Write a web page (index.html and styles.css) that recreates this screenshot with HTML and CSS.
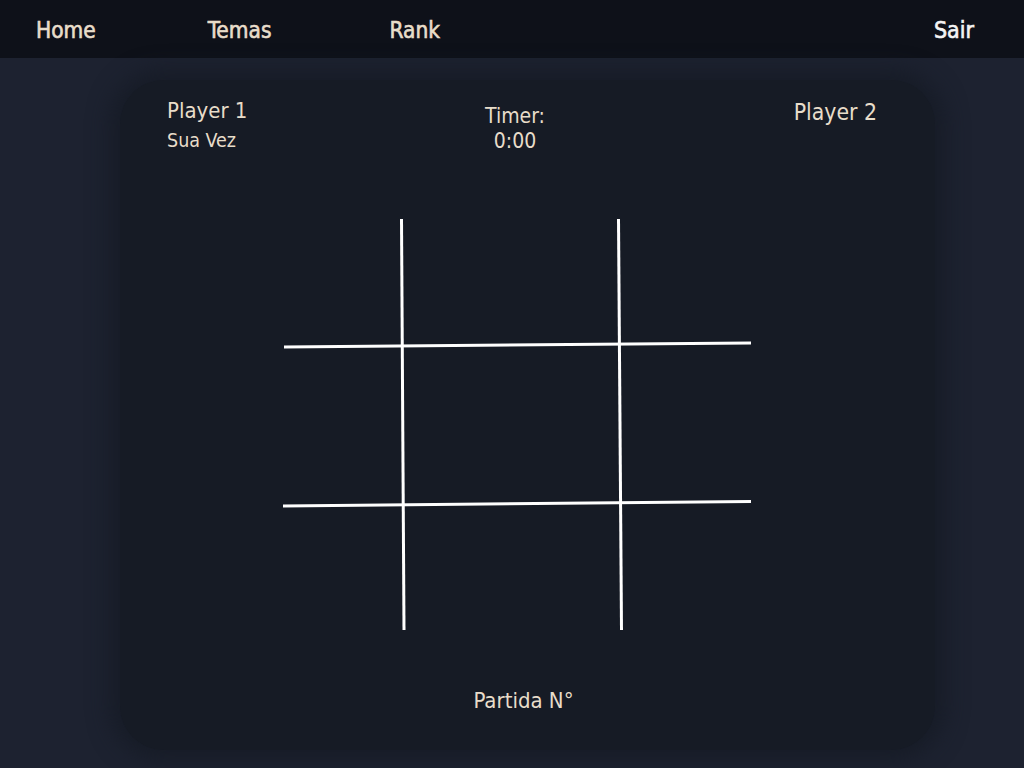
FILE: index.html
```html
<!DOCTYPE html>
<html lang="pt">
<head>
<meta charset="utf-8">
<title>Jogo da Velha</title>
<link rel="stylesheet" href="styles.css">
</head>
<body>
<nav class="topbar">
  <div class="nav-left">
    <a class="nav-link" href="#">Home</a>
    <a class="nav-link" href="#">Temas</a>
    <a class="nav-link" href="#">Rank</a>
  </div>
  <a class="nav-link nav-exit" href="#">Sair</a>
</nav>
<main class="card">
  <header class="status">
    <div class="player player-one">
      <div class="player-name">Player 1</div>
      <div class="turn">Sua Vez</div>
    </div>
    <div class="timer">
      <div>Timer:</div>
      <div>0:00</div>
    </div>
    <div class="player player-two">
      <div class="player-name">Player 2</div>
    </div>
  </header>
  <section class="board">
    <svg class="board-lines" width="470" height="414" viewBox="0 0 470 414">
      <g stroke="#ffffff" stroke-width="3" fill="none">
        <line x1="118.5" y1="1" x2="121" y2="412"/>
        <line x1="335.5" y1="1" x2="338.5" y2="412"/>
        <line x1="1" y1="129" x2="468" y2="125"/>
        <line x1="0" y1="288" x2="468" y2="283.5"/>
      </g>
    </svg>
  </section>
  <footer class="match">Partida N°</footer>
</main>
</body>
</html>
```

FILE: styles.css
```css
html, body {
  margin: 0;
  padding: 0;
}

body {
  background: #1d2230;
  font-family: "DejaVu Sans Condensed", "DejaVu Sans", sans-serif;
  color: #e8ddca;
  height: 768px;
  overflow: hidden;
}

.topbar {
  height: 58px;
  background: #0e1119;
  display: flex;
  align-items: center;
  justify-content: space-between;
  padding: 0 50px 0 36px;
}

.nav-left {
  display: flex;
  gap: 112px;
}

.nav-link {
  color: #e8ddca;
  text-decoration: none;
  font-size: 22.5px;
  font-weight: 400;
  -webkit-text-stroke: 0.6px currentColor;
  line-height: 24px;
  padding-top: 1px;
}

.nav-link:nth-child(3) {
  margin-left: 6px;
}

.nav-exit {
  color: #f4f4f4;
  font-size: 23px;
}

.card {
  width: 815px;
  height: 670px;
  margin: 22px 0 0 120px;
  background: #161b25;
  border-radius: 44px;
  box-shadow: 0 0 22px 10px #171c27;
  display: flex;
  flex-direction: column;
}

.status {
  display: grid;
  grid-template-columns: 1fr auto 1fr;
  padding: 19px 58px 0 47px;
}

.player-name {
  font-size: 22px;
  line-height: 24px;
}

.player-two .player-name {
  font-size: 22.8px;
}

.turn {
  font-size: 19.5px;
  line-height: 22px;
  margin-top: 7px;
}

.player-two {
  justify-self: end;
  padding-top: 1px;
}

.timer {
  font-size: 21px;
  line-height: 25px;
  text-align: center;
  margin-right: 14px;
  padding-top: 5px;
}

.board {
  display: flex;
  margin: 64px 0 0 163px;
}

.board-lines {
  display: block;
}

.match {
  font-size: 22px;
  line-height: 26px;
  text-align: center;
  margin: 56px 0 0 -8px;
}
```
